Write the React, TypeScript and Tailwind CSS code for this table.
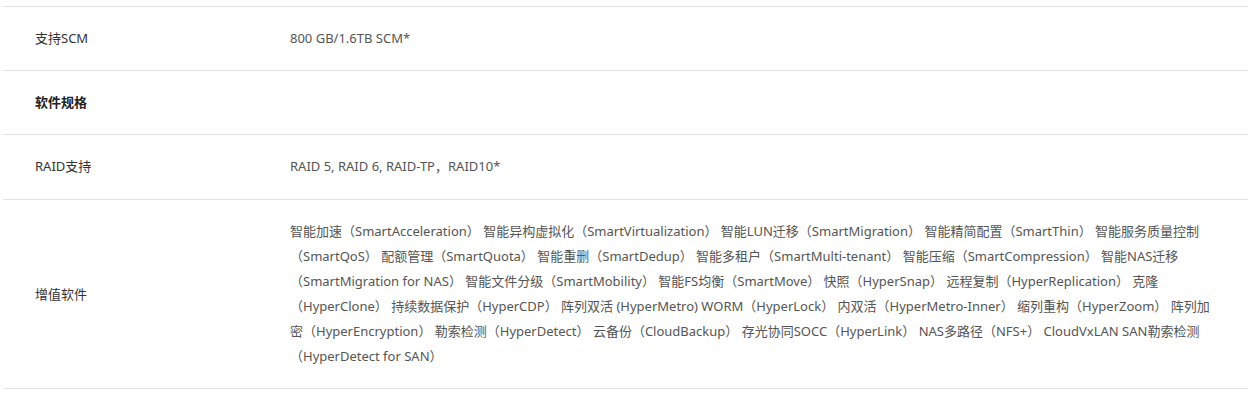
import React from 'react';

const software =
  '智能加速（SmartAcceleration） 智能异构虚拟化（SmartVirtualization） 智能LUN迁移（SmartMigration） 智能精简配置（SmartThin） 智能服务质量控制（SmartQoS） 配额管理（SmartQuota） 智能重删（SmartDedup） 智能多租户（SmartMulti-tenant） 智能压缩（SmartCompression） 智能NAS迁移（SmartMigration for NAS） 智能文件分级（SmartMobility） 智能FS均衡（SmartMove） 快照（HyperSnap） 远程复制（HyperReplication） 克隆（HyperClone） 持续数据保护（HyperCDP） 阵列双活 (HyperMetro) WORM（HyperLock） 内双活（HyperMetro-Inner） 缩列重构（HyperZoom） 阵列加密（HyperEncryption） 勒索检测（HyperDetect） 云备份（CloudBackup） 存光协同SOCC（HyperLink） NAS多路径（NFS+） CloudVxLAN SAN勒索检测（HyperDetect for SAN）';

const rows = [
  { label: '支持SCM', value: '800 GB/1.6TB SCM*', pad: 'py-[19px]' },
  { label: '软件规格', value: '', heading: true, pad: 'py-[19px]' },
  { label: 'RAID支持', value: 'RAID 5, RAID 6, RAID-TP，RAID10*', pad: 'pt-[19px] pb-[20px]' },
  { label: '增值软件', value: software, pad: 'py-[19px]' },
];

const App = () => {
  return (
    <div className="w-[1253px] h-[399px] bg-white pt-[6px] font-['Segoe_UI','Noto_Sans','Noto_Sans_CJK_SC',sans-serif] text-[13px] leading-[25px]">
      <div className="ml-[3px] w-[1245px] border-b border-[#e3e3e3]">
        {rows.map((row) => (
          <div
            key={row.label}
            className={`grid grid-cols-[287px_1fr] items-center border-t border-[#e3e3e3] ${row.pad}`}
          >
            <div
              className={
                row.heading
                  ? 'pl-[32px] font-bold text-[#222]'
                  : 'pl-[32px] text-[#333]'
              }
            >
              {row.label}
            </div>
            <div className="pr-[30px] text-[#555] min-h-[25px]">{row.value}</div>
          </div>
        ))}
      </div>
    </div>
  );
};

export default App;
